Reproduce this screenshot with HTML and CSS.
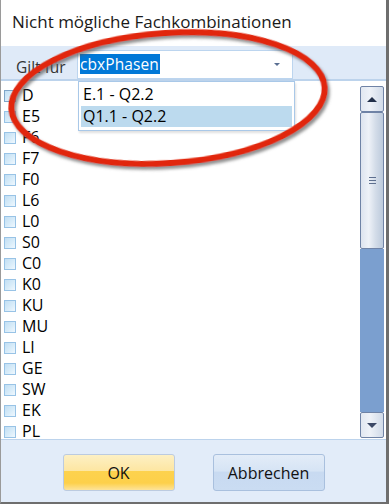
FILE: index.html
```html
<!DOCTYPE html>
<html lang="de">
<head>
<meta charset="utf-8">
<title>Nicht mögliche Fachkombinationen</title>
<link rel="stylesheet" href="styles.css">
</head>
<body>
<div class="window">
  <div class="titlebar">Nicht mögliche Fachkombinationen</div>
  <div class="toolbar">
    <span class="label">Gilt für</span>
    <div class="combo">
      <span class="combo-text">cbxPhasen</span>
      <span class="combo-arrow"></span>
    </div>
  </div>
  <div class="main">
    <ul class="list">
      <li class="item focus"><span class="cb"></span>D</li>
      <li class="item"><span class="cb"></span>E5</li>
      <li class="item"><span class="cb"></span>F6</li>
      <li class="item"><span class="cb"></span>F7</li>
      <li class="item"><span class="cb"></span>F0</li>
      <li class="item"><span class="cb"></span>L6</li>
      <li class="item"><span class="cb"></span>L0</li>
      <li class="item"><span class="cb"></span>S0</li>
      <li class="item"><span class="cb"></span>C0</li>
      <li class="item"><span class="cb"></span>K0</li>
      <li class="item"><span class="cb"></span>KU</li>
      <li class="item"><span class="cb"></span>MU</li>
      <li class="item"><span class="cb"></span>LI</li>
      <li class="item"><span class="cb"></span>GE</li>
      <li class="item"><span class="cb"></span>SW</li>
      <li class="item"><span class="cb"></span>EK</li>
      <li class="item"><span class="cb"></span>PL</li>
    </ul>
    <div class="scrollbar">
      <div class="sb-btn"><span class="arrow-up"></span></div>
      <div class="sb-thumb"><span class="grip"></span></div>
      <div class="sb-track"></div>
      <div class="sb-btn"><span class="arrow-down"></span></div>
    </div>
  </div>
  <div class="footer">
    <button class="btn btn-ok">OK</button>
    <button class="btn btn-cancel">Abbrechen</button>
  </div>

  <div class="dropdown">
    <div class="dd-item">E.1 - Q2.2</div>
    <div class="dd-item selected">Q1.1 - Q2.2</div>
  </div>

  <svg class="annotation" width="389" height="504" viewBox="0 0 389 504">
    <defs>
      <filter id="sh" x="-10%" y="-20%" width="120%" height="140%">
        <feDropShadow dx="2" dy="3" stdDeviation="1.6" flood-color="#555" flood-opacity="0.65"/>
      </filter>
    </defs>
    <ellipse cx="168" cy="98" rx="157" ry="65" transform="rotate(-4 168 98)" fill="none" stroke="#e1270b" stroke-width="6" filter="url(#sh)"/>
  </svg>
</div>
</body>
</html>
```

FILE: styles.css
```css
* { box-sizing: border-box; }
html, body { margin: 0; padding: 0; }
body {
  width: 389px;
  height: 504px;
  overflow: hidden;
  background: #fff;
  font-family: "Open Sans", "Noto Sans", "Liberation Sans", sans-serif;
  color: #000;
}
.window {
  position: relative;
  width: 389px;
  height: 504px;
  display: flex;
  flex-direction: column;
  border-left: 1px solid #9a9a9a;
  border-right: 3px solid #6e6e6e;
  border-bottom: 2px solid #6e6e6e;
  background: #fff;
}
.titlebar {
  height: 46px;
  padding: 10px 0 0 11px;
  font-size: 17px;
  line-height: 24px;
  color: #1a1a1a;
}
.toolbar {
  height: 35px;
  background: #dfeaf8;
  border-bottom: 2px solid #bcd3ec;
  display: flex;
  align-items: center;
  padding-left: 15px;
}
.label {
  font-size: 15.5px;
  color: #333;
  width: 61px;
  padding-top: 8px;
}
.combo {
  width: 216px;
  height: 29px;
  margin-top: 3px;
  background: #fff;
  border: 1px solid #bcd5ef;
  display: flex;
  align-items: center;
  justify-content: space-between;
  padding: 0 12px 0 2px;
}
.combo-text {
  background: #0078d7;
  color: #fff;
  font-size: 15.5px;
  line-height: 20px;
  padding: 0 1px 0 0;
  letter-spacing: 0.1px;
}
.combo-arrow {
  width: 0;
  height: 0;
  border-left: 3px solid transparent;
  border-right: 3px solid transparent;
  border-top: 3px solid #5a6f92;
}
.main {
  flex: 1;
  display: flex;
  min-height: 0;
  border-bottom: 1px solid #bcd3ec;
}
.list {
  flex: 1;
  list-style: none;
  margin: 0;
  padding: 4px 0 0 3px;
  overflow: hidden;
}
.item {
  height: 21px;
  display: flex;
  align-items: center;
  font-size: 16px;
  line-height: 21px;
  gap: 6px;
}
.cb {
  width: 12px;
  height: 12px;
  border: 1px solid #98c3e6;
  background: linear-gradient(135deg, #c2dff4 0%, #d8ecf9 55%, #f0f8fe 100%);
  flex: none;
}
.focus .cb { border-color: #7fa6c9; }
.scrollbar {
  width: 24px;
  margin: 5px 2px 1px 0;
  display: flex;
  flex-direction: column;
}
.sb-btn {
  height: 26px;
  border: 1px solid #6f83a6;
  border-radius: 2px;
  background: linear-gradient(90deg, #e2e8f1 0%, #eef2f8 40%, #d0dae8 100%);
  display: flex;
  align-items: center;
  justify-content: center;
  flex: none;
}
.arrow-up {
  width: 0; height: 0;
  border-left: 5px solid transparent;
  border-right: 5px solid transparent;
  border-bottom: 5px solid #22304a;
}
.arrow-down {
  width: 0; height: 0;
  border-left: 5px solid transparent;
  border-right: 5px solid transparent;
  border-top: 5px solid #3b4866;
}
.sb-thumb {
  height: 137px;
  border: 1px solid #6f83a6;
  border-radius: 2px;
  background: linear-gradient(90deg, #dde4ef 0%, #eef2f8 35%, #d4dde9 65%, #bccadc 100%);
  display: flex;
  align-items: center;
  justify-content: center;
  flex: none;
}
.grip {
  width: 7px;
  height: 7px;
  background: repeating-linear-gradient(180deg, #5d6f8f 0 1px, transparent 1px 3px);
}
.sb-track {
  flex: 1;
  background: #7b9fcf;
}
.footer {
  height: 62px;
  background: #e2ecf9;
  display: flex;
  align-items: center;
  justify-content: center;
  gap: 38px;
  padding: 3px 0 0 0;
}
.btn {
  width: 112px;
  height: 37px;
  border-radius: 3px;
  font-family: "Open Sans", "Noto Sans", "Liberation Sans", sans-serif;
  font-size: 16px;
  color: #111;
  padding: 0;
}
.btn-ok {
  border: 1px solid #bccbe0;
  background: linear-gradient(180deg, #fdf0c4 0%, #fde6a2 45%, #fdd24e 47%, #fdd04a 80%, #fde39a 100%);
}
.btn-cancel {
  border: 1px solid #a9c0de;
  background: linear-gradient(180deg, #e3ecf8 0%, #d6e4f5 45%, #c8daf1 50%, #cadcf2 100%);
}
.dropdown {
  position: absolute;
  left: 77px;
  top: 81px;
  width: 217px;
  height: 50px;
  background: #fff;
  border: 1px solid #a9c8e8;
  padding: 2px 2px;
  box-shadow: 1px 2px 2px rgba(0,0,0,0.12);
}
.dd-item {
  height: 22px;
  padding-left: 2px;
  font-size: 16px;
  line-height: 21px;
}
.dd-item.selected {
  background: #bcdaee;
  height: 21px;
}
.annotation {
  position: absolute;
  left: -1px;
  top: 0;
  pointer-events: none;
}
```
